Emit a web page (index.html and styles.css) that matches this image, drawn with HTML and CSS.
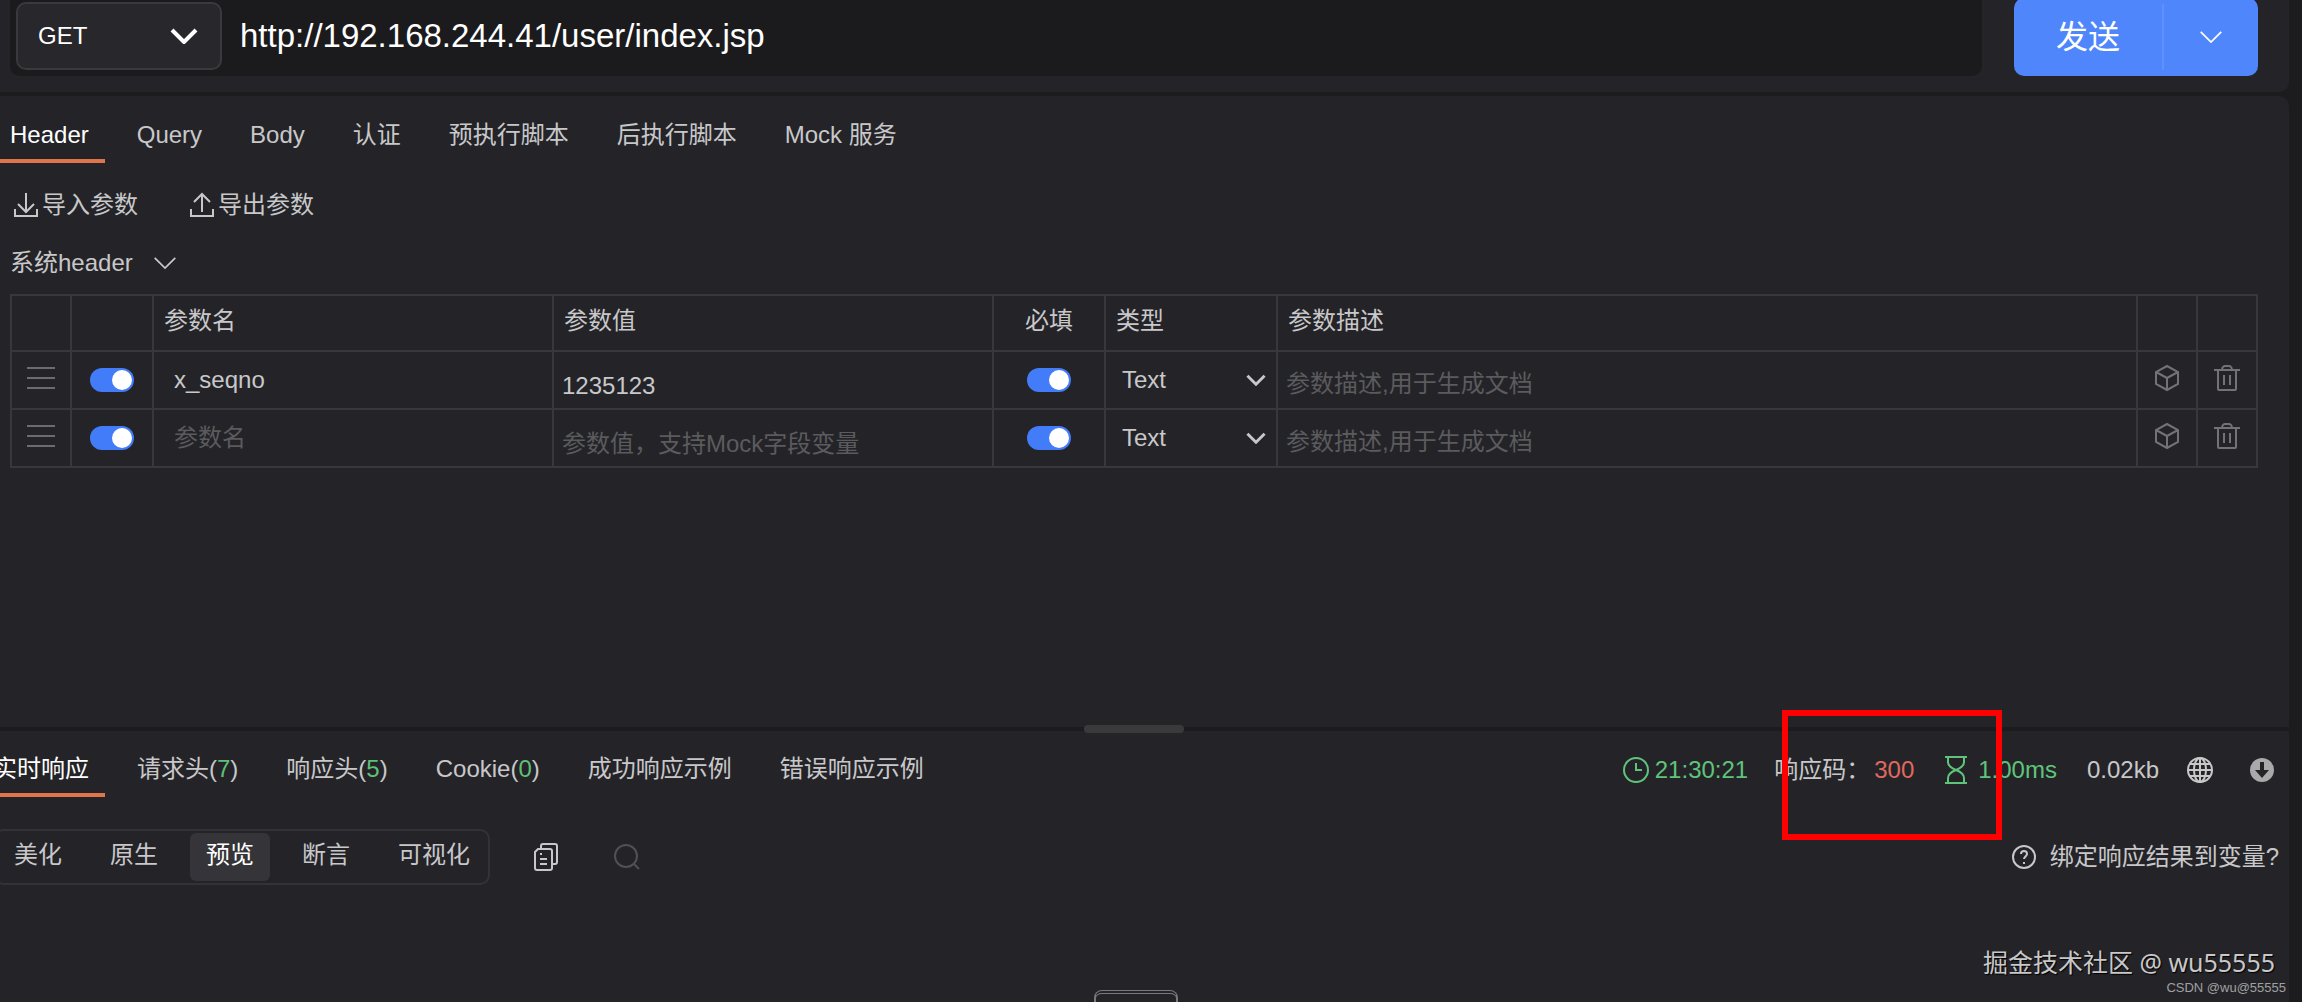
FILE: index.html
```html
<!DOCTYPE html>
<html lang="zh-CN">
<head>
    <meta charset="UTF-8">
    <meta name="viewport" content="width=device-width, initial-scale=1.0">
    <title>接口调试</title>
    <link rel="stylesheet" href="styles.css">
</head>
<body>
    <svg class="sprite" aria-hidden="true">
        <symbol id="chevron" viewBox="0 0 28 16"><path d="M2 2l12 12L26 2"/></symbol>
        <symbol id="import" viewBox="0 0 24 26"><path d="M12 1v19M4 12l8 8 8-8M1 17v7h22v-7"/></symbol>
        <symbol id="export" viewBox="0 0 24 26"><path d="M12 20V2M4 10l8-8 8 8M1 17v7h22v-7"/></symbol>
        <symbol id="drag" viewBox="0 0 28 22"><path d="M0 1h28M0 11h28M0 21h28"/></symbol>
        <symbol id="cube" viewBox="0 0 26 28"><path d="M13 2l11 6v12l-11 6-11-6V8zM2 8l11 6 11-6M13 14v12"/></symbol>
        <symbol id="trash" viewBox="0 0 26 28"><path d="M0 6h26M4 6v19q0 1 1 1h16q1 0 1-1V6M8 5q1-3 3-3h4q2 0 3 3M10 11v10M16 11v10"/></symbol>
        <symbol id="copy" viewBox="0 0 24 28"><path d="M7 6V3q0-2 2-2h12q2 0 2 2v16q0 2-2 2h-3M4 6h12q2 0 2 2v17q0 2-2 2H3q-2 0-2-2V9zM6 11h2M6 16h7M6 21h7"/></symbol>
        <symbol id="search" viewBox="0 0 26 26"><circle cx="12" cy="12" r="11"/><path d="M20 20l5 5"/></symbol>
        <symbol id="clock" viewBox="0 0 26 26"><circle cx="13" cy="13" r="12"/><path d="M13 6v7h6"/></symbol>
        <symbol id="hourglass" viewBox="0 0 24 28"><path d="M1 1h22M1 27h22M4 1v5c0 4 3 6 8 8 5 2 8 4 8 8v5M20 1v5c0 4-3 6-8 8-5 2-8 4-8 8v5"/></symbol>
        <symbol id="globe" viewBox="0 0 26 26"><circle cx="13" cy="13" r="12"/><ellipse cx="13" cy="13" rx="6" ry="12"/><path d="M1 13h24M13 1v24M3 7h20M3 19h20"/></symbol>
        <symbol id="download" viewBox="0 0 24 24"><circle cx="12" cy="12" r="12" fill="#a9a9ab" stroke="none"/><path d="M12 4v9" stroke="#242428" stroke-width="4"/><path d="M5 12h14l-7 8z" fill="#242428" stroke="none"/></symbol>
        <symbol id="help" viewBox="0 0 24 24"><circle cx="12" cy="12" r="11"/><path d="M9 9c0-4 6-4 6 0 0 2-3 3-3 5M12 17v2"/></symbol>
    </svg>

    <header class="url-bar">
        <div class="url-box">
            <div class="select method">
                <select aria-label="请求方法">
                    <option>GET</option>
                    <option>POST</option>
                </select>
                <svg class="arrow"><use href="#chevron"/></svg>
            </div>
            <input class="url" type="text" aria-label="URL" value="http://192.168.244.41/user/index.jsp">
        </div>
        <div class="send">
            <button class="send-main">发送</button>
            <button class="send-more" aria-label="更多"><svg class="icon-more"><use href="#chevron"/></svg></button>
        </div>
    </header>

    <main class="panel request">
        <nav class="tabs">
            <a class="tab active" href="#">Header</a>
            <a class="tab" href="#">Query</a>
            <a class="tab" href="#">Body</a>
            <a class="tab" href="#">认证</a>
            <a class="tab" href="#">预执行脚本</a>
            <a class="tab" href="#">后执行脚本</a>
            <a class="tab" href="#">Mock 服务</a>
        </nav>
        <div class="actions">
            <button><svg class="icon-io"><use href="#import"/></svg>导入参数</button>
            <button><svg class="icon-io"><use href="#export"/></svg>导出参数</button>
        </div>
        <button class="sys-header">系统header<svg class="icon-more"><use href="#chevron"/></svg></button>

        <table class="params">
            <colgroup>
                <col class="c-icon"><col class="c-switch"><col class="c-name"><col class="c-value">
                <col class="c-required"><col class="c-type"><col><col class="c-icon"><col class="c-icon">
            </colgroup>
            <thead>
                <tr>
                    <th></th><th></th><th>参数名</th><th>参数值</th><th class="center">必填</th><th>类型</th><th>参数描述</th><th></th><th></th>
                </tr>
            </thead>
            <tbody>
                <tr>
                    <td class="center"><svg class="icon-drag"><use href="#drag"/></svg></td>
                    <td class="center"><input class="switch" type="checkbox" aria-label="启用" checked></td>
                    <td><input class="cell name" type="text" aria-label="参数名" placeholder="参数名" value="x_seqno"></td>
                    <td><input class="cell value" type="text" aria-label="参数值" placeholder="参数值，支持Mock字段变量" value="1235123"></td>
                    <td class="center"><input class="switch" type="checkbox" aria-label="必填" checked></td>
                    <td>
                        <div class="select type">
                            <select aria-label="类型"><option>Text</option><option>File</option></select>
                            <svg class="arrow"><use href="#chevron"/></svg>
                        </div>
                    </td>
                    <td><input class="cell desc" type="text" aria-label="参数描述" placeholder="参数描述,用于生成文档"></td>
                    <td class="center"><button aria-label="模型"><svg class="icon-row"><use href="#cube"/></svg></button></td>
                    <td class="center"><button aria-label="删除"><svg class="icon-row"><use href="#trash"/></svg></button></td>
                </tr>
                <tr>
                    <td class="center"><svg class="icon-drag"><use href="#drag"/></svg></td>
                    <td class="center"><input class="switch" type="checkbox" aria-label="启用" checked></td>
                    <td><input class="cell name" type="text" aria-label="参数名" placeholder="参数名"></td>
                    <td><input class="cell value" type="text" aria-label="参数值" placeholder="参数值，支持Mock字段变量"></td>
                    <td class="center"><input class="switch" type="checkbox" aria-label="必填" checked></td>
                    <td>
                        <div class="select type">
                            <select aria-label="类型"><option>Text</option><option>File</option></select>
                            <svg class="arrow"><use href="#chevron"/></svg>
                        </div>
                    </td>
                    <td><input class="cell desc" type="text" aria-label="参数描述" placeholder="参数描述,用于生成文档"></td>
                    <td class="center"><button aria-label="模型"><svg class="icon-row"><use href="#cube"/></svg></button></td>
                    <td class="center"><button aria-label="删除"><svg class="icon-row"><use href="#trash"/></svg></button></td>
                </tr>
            </tbody>
        </table>
    </main>

    <div class="splitter"><span class="grip"></span></div>

    <section class="panel response">
        <div class="response-head">
            <nav class="tabs">
                <a class="tab active" href="#">实时响应</a>
                <a class="tab" href="#">请求头(<b>7</b>)</a>
                <a class="tab" href="#">响应头(<b>5</b>)</a>
                <a class="tab" href="#">Cookie(<b>0</b>)</a>
                <a class="tab" href="#">成功响应示例</a>
                <a class="tab" href="#">错误响应示例</a>
            </nav>
            <div class="status">
                <span class="time green"><svg class="icon-26"><use href="#clock"/></svg>21:30:21</span>
                <span class="code">响应码：<em>300</em><i class="mark"></i></span>
                <span class="cost green"><svg class="icon-copy"><use href="#hourglass"/></svg>1.00ms</span>
                <span class="size">0.02kb</span>
                <button class="net" aria-label="网络"><svg class="icon-26"><use href="#globe"/></svg></button>
                <button aria-label="下载"><svg class="icon-24"><use href="#download"/></svg></button>
            </div>
        </div>
        <div class="response-tools">
            <div class="segments">
                <button>美化</button>
                <button>原生</button>
                <button class="on">预览</button>
                <button>断言</button>
                <button>可视化</button>
            </div>
            <button class="copy" aria-label="复制"><svg class="icon-copy"><use href="#copy"/></svg></button>
            <button class="search" aria-label="搜索"><svg class="icon-26"><use href="#search"/></svg></button>
            <a class="bind" href="#"><svg class="icon-24"><use href="#help"/></svg>绑定响应结果到变量?</a>
        </div>
        <footer class="credits">
            <p class="community">掘金技术社区 @ wu55555</p>
            <p class="csdn">CSDN @wu@55555</p>
        </footer>
        <div class="drawer"></div>
    </section>
</body>
</html>
```
FILE: styles.css
```css
* {
    box-sizing: border-box;
}
body {
    display: flex;
    flex-direction: column;
    min-height: 100vh;
    margin: 0;
    padding-right: 13px;
    overflow: hidden;
    background: #1c1c1e;
    color: #c8c8ca;
    font-family: "Liberation Sans", "Noto Sans CJK SC", sans-serif;
    font-size: 24px;
    line-height: 32px;
}
button, input, select {
    margin: 0;
    padding: 0;
    border: none;
    background: none;
    color: inherit;
    font: inherit;
}
button {
    display: flex;
    align-items: center;
    cursor: pointer;
}
a {
    color: inherit;
    text-decoration: none;
}
svg {
    flex: none;
    display: block;
    fill: none;
    stroke: currentColor;
    stroke-width: 2;
}
.sprite {
    position: absolute;
    width: 0;
    height: 0;
}
.panel {
    background: #242428;
}

/* url bar */
.url-bar {
    display: flex;
    gap: 32px;
    padding: 0 31px 16px 10px;
    background: #242428;
    border-radius: 0 0 10px 0;
}
.url-box {
    flex: 1;
    display: flex;
    gap: 18px;
    height: 76px;
    padding: 2px 6px 6px;
    background: #1b1b1d;
    border-radius: 0 0 10px 10px;
}
.select {
    display: grid;
    align-items: center;
}
.select select, .select .arrow {
    grid-area: 1 / 1;
}
.select select {
    appearance: none;
    width: 100%;
    height: 100%;
}
.select .arrow {
    justify-self: end;
    pointer-events: none;
    stroke-width: 4;
}
.method {
    width: 206px;
    height: 68px;
    background: #28282c;
    border: 2px solid #3a3a3e;
    border-radius: 10px;
    color: #fff;
}
.method select {
    padding-left: 20px;
}
.method .arrow {
    width: 28px;
    height: 16px;
    margin-right: 22px;
}
.url {
    flex: 1;
    color: #fff;
    font-size: 33px;
}
.send {
    display: flex;
    width: 244px;
    height: 78px;
    margin-top: -2px;
    background: #4f86fb;
    border-radius: 10px;
    color: #fff;
}
.send button {
    justify-content: center;
}
.send-main {
    flex: 1;
    font-size: 32px;
}
.send .send-more {
    width: 96px;
    margin: 6px 0;
    border-left: 2px solid #5e91fb;
}
.icon-more {
    width: 24px;
    height: 14px;
}

/* request */
.request {
    min-height: 631px;
    margin-top: 4px;
    padding: 1px 31px 0 10px;
    border-radius: 0 10px 0 0;
}
.tabs {
    display: flex;
    gap: 16px;
}
.tab {
    padding: 22px 16px 8px;
    border-bottom: 4px solid transparent;
    white-space: nowrap;
}
.tab.active {
    border-color: #e0754c;
    color: #fff;
}
.tab b {
    color: #5fbf77;
    font-weight: normal;
}
.request .tabs {
    margin-left: -16px;
}
.actions {
    display: flex;
    gap: 52px;
    margin: 26px 4px;
}
.actions button {
    gap: 4px;
}
.icon-io {
    width: 24px;
    height: 26px;
}
.sys-header {
    gap: 20px;
    margin-bottom: 15px;
}
.params {
    width: 100%;
    table-layout: fixed;
    border-collapse: collapse;
}
.c-icon { width: 60px; }
.c-switch { width: 82px; }
.c-name { width: 400px; }
.c-value { width: 440px; }
.c-required { width: 112px; }
.c-type { width: 172px; }
.params th, .params td {
    height: 58px;
    padding: 0;
    border: 2px solid #38383c;
}
.params th {
    height: 56px;
    padding: 0 10px 5px;
    font-weight: normal;
    text-align: left;
}
.params .center {
    text-align: center;
}
.params td svg, .params td button, .switch {
    margin: 0 auto;
}
.icon-drag {
    width: 28px;
    height: 22px;
    color: #6c6c6f;
}
.icon-row {
    width: 26px;
    height: 28px;
    color: #737376;
}
.params .icon-drag, .params td button {
    margin-bottom: 4px;
}
.switch {
    appearance: none;
    display: flex;
    justify-content: flex-end;
    width: 44px;
    height: 24px;
    padding: 2px;
    border-radius: 12px;
    background: #53555a;
}
.switch:checked {
    background: #437cf8;
}
.switch::before {
    content: "";
    width: 20px;
    height: 20px;
    border-radius: 50%;
    background: #fff;
}
.cell {
    display: block;
    width: 100%;
    height: 54px;
}
.cell::placeholder {
    color: #5b5b5e;
}
.cell.name {
    padding-left: 20px;
}
.cell.value {
    padding: 12px 0 0 8px;
}
.cell.desc {
    padding: 8px 0 0 8px;
}
.type {
    height: 54px;
}
.type select {
    padding-left: 16px;
}
.type .arrow {
    width: 20px;
    height: 12px;
    margin-right: 10px;
}

/* response */
.splitter {
    display: flex;
    justify-content: center;
    align-items: center;
    height: 4px;
    padding-right: 21px;
}
.grip {
    flex: none;
    width: 100px;
    height: 8px;
    border-radius: 4px;
    background: #3a3a3c;
    z-index: 1;
}
.response {
    flex: 1;
    position: relative;
    display: flex;
    flex-direction: column;
}
.response-head {
    display: flex;
    justify-content: space-between;
    padding-right: 15px;
}
.response .tabs {
    margin-left: -23px;
}
.status {
    display: flex;
    align-items: center;
    padding-top: 12px;
    white-space: nowrap;
}
.status > span {
    display: flex;
    align-items: center;
}
.green {
    color: #5fc47b;
}
.time {
    gap: 6px;
    margin-right: 26px;
}
.code {
    position: relative;
    gap: 4px;
    margin-right: 30px;
}
.code em {
    color: #e0695f;
    font-style: normal;
}
/* highlight frame round the response code */
.mark {
    position: absolute;
    left: 8px;
    top: -44px;
    width: 220px;
    height: 130px;
    border: 6px solid #fe0000;
    z-index: 1;
}
.cost {
    gap: 10px;
    margin-right: 30px;
}
.size {
    margin-right: 28px;
}
.net {
    margin-right: 37px;
}
.icon-24 {
    width: 24px;
    height: 24px;
}
.icon-26 {
    width: 26px;
    height: 26px;
}
.icon-copy {
    width: 24px;
    height: 28px;
}
.response-tools {
    display: flex;
    align-items: center;
    margin-top: 32px;
    padding-right: 10px;
}
.segments {
    display: flex;
    gap: 16px;
    margin-left: -6px;
    padding: 2px;
    border: 2px solid #333337;
    border-radius: 10px;
}
.segments button {
    height: 48px;
    padding: 0 16px 4px;
    border-radius: 6px;
}
.segments .on {
    background: #353539;
    color: #fff;
}
.copy {
    margin: 0 56px 0 44px;
}
.search {
    color: #515154;
}
.bind {
    display: flex;
    align-items: center;
    gap: 14px;
    margin-left: auto;
}
.credits {
    margin-top: auto;
    padding: 0 3px 4px;
    text-align: right;
}
.credits p {
    margin: 0;
}
.community {
    padding-right: 11px;
    font-family: "Noto Sans", "Noto Sans CJK SC", sans-serif;
    font-size: 25px;
    text-shadow: 1px 1px 1px #000;
}
.csdn {
    color: #a0a0a2;
    font-size: 13px;
    line-height: 20px;
}
.drawer {
    position: absolute;
    left: calc(50% - 51px);
    bottom: 0;
    width: 84px;
    height: 12px;
    border: 2px solid #7a7a7c;
    border-top: 4px double #7a7a7c;
    border-bottom: none;
    border-radius: 8px 8px 0 0;
}
```
